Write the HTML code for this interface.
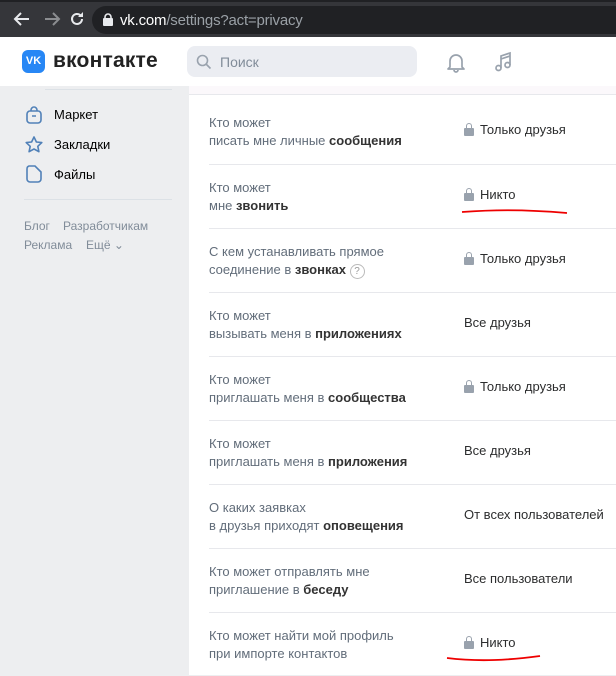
<!DOCTYPE html>
<html><head><meta charset="utf-8"><style>
*{margin:0;padding:0;box-sizing:border-box}
body{width:616px;height:675px;overflow:hidden;background:#edeef0;font-family:"Liberation Sans",Arial,sans-serif;position:relative}
.chrome{position:absolute;left:0;top:0;width:616px;height:37px;background:#35363a;border-top:2px solid #202124}
.url{position:absolute;left:92px;top:4px;width:540px;height:28px;border-radius:14px;background:#202124}
.url span{position:absolute;left:28px;top:6px;font-size:15px;color:#9aa0a6;letter-spacing:-0.2px}
.url b{font-weight:normal;color:#fff}
.hdr{position:absolute;left:0;top:37px;width:616px;height:49px;background:#fff}
.abs{position:absolute}
.side{position:absolute;left:0;top:86px;width:189px;height:589px;background:#edeef0}
.side .it{position:absolute;left:54px;font-size:13px;color:#000}
.side .ft{position:absolute;font-size:12px;color:#818c99}
.main{position:absolute;left:189px;top:86px;width:427px;height:589px;background:#fff}
.row{position:absolute;left:20px;width:407px;height:64px;border-top:1px solid #e7e8ec}
.lbl{position:absolute;left:0;top:14px;font-size:13px;line-height:18px;color:#626d7a}
.lbl b{color:#333;font-weight:bold}
.val{position:absolute;left:255px;top:22px;font-size:13px;color:#2c2d2e}
.val.l{padding-left:16px}
.val.l:before{content:"";position:absolute;left:0;top:6px;width:10px;height:8px;background:#99a2ad;border-radius:1px}
.val.l:after{content:"";position:absolute;left:2px;top:1px;width:6px;height:6px;border:1.5px solid #99a2ad;border-bottom:none;border-radius:3px 3px 0 0;box-sizing:border-box}
</style></head><body>
<div class="chrome">
<svg class="abs" style="left:12px;top:9px" width="20" height="16" viewBox="0 0 20 16"><path d="M17 8H4M9 2L3 8l6 6" stroke="#e8eaed" stroke-width="2" fill="none"/></svg>
<svg class="abs" style="left:42px;top:9px" width="20" height="16" viewBox="0 0 20 16"><path d="M3 8h13M11 2l6 6-6 6" stroke="#8b8d90" stroke-width="2" fill="none"/></svg>
<svg class="abs" style="left:68px;top:8px" width="18" height="18" viewBox="0 0 18 18"><path d="M14 9a5 5 0 1 1-1.5-3.6" stroke="#e8eaed" stroke-width="2" fill="none"/><path d="M15 2v5h-5z" fill="#e8eaed"/></svg>
<div class="url"><svg class="abs" style="left:11px;top:7px" width="10" height="13" viewBox="0 0 10 13"><rect x="0" y="5" width="10" height="8" rx="1" fill="#e8eaed"/><path d="M2 6V4a3 3 0 0 1 6 0v2" stroke="#e8eaed" stroke-width="1.6" fill="none"/></svg><span><b>vk.com</b>/settings?act=privacy</span></div>
</div>
<div class="hdr">
<div class="abs" style="left:22px;top:13px;width:23px;height:23px;background:#2787f5;border-radius:6px;color:#fff;font-weight:bold;font-size:11px;text-align:center;line-height:23px">VK</div>
<div class="abs" style="left:53px;top:12px;font-size:21px;font-weight:bold;color:#222;letter-spacing:0.2px">вконтакте</div>
<div class="abs" style="left:187px;top:9px;width:230px;height:31px;background:#ebedf2;border-radius:8px"></div>
<svg class="abs" style="left:196px;top:17px" width="16" height="16" viewBox="0 0 16 16"><circle cx="6.5" cy="6.5" r="5" stroke="#99a2ad" stroke-width="1.6" fill="none"/><path d="M10 10l4.5 4.5" stroke="#99a2ad" stroke-width="1.6"/></svg>
<div class="abs" style="left:220px;top:17px;font-size:14px;color:#818c99">Поиск</div>
<svg class="abs" style="left:444px;top:13px" width="24" height="24" viewBox="0 0 24 24"><path d="M6 17V11a6 6 0 0 1 12 0v6l2 2H4z" stroke="#99a2ad" stroke-width="1.7" fill="none" stroke-linejoin="round"/><path d="M10 20a2 2 0 0 0 4 0" stroke="#99a2ad" stroke-width="1.7" fill="none"/></svg>
<svg class="abs" style="left:492px;top:13px" width="24" height="24" viewBox="0 0 24 24"><path d="M9 18V6l9-3v12" stroke="#99a2ad" stroke-width="1.7" fill="none"/><circle cx="6.5" cy="18" r="2.5" stroke="#99a2ad" stroke-width="1.7" fill="none"/><circle cx="15.5" cy="15" r="2.5" stroke="#99a2ad" stroke-width="1.7" fill="none"/><path d="M9 9l9-3" stroke="#99a2ad" stroke-width="1.7"/></svg>
</div>
<div class="side">
<div class="abs" style="left:45px;top:3px;width:127px;height:1px;background:#dce1e6"></div>
<svg class="abs" style="left:24px;top:19px" width="20" height="20" viewBox="0 0 20 20"><rect x="3" y="6" width="14" height="12" rx="3" stroke="#5181b8" stroke-width="1.6" fill="none"/><path d="M7 6V5a3 3 0 0 1 6 0v1M8 11h4" stroke="#5181b8" stroke-width="1.6" fill="none"/></svg>
<div class="it" style="top:21px">Маркет</div>
<svg class="abs" style="left:24px;top:49px" width="20" height="20" viewBox="0 0 20 20"><path d="M10 2l2.4 5 5.4.6-4 3.7 1.1 5.4L10 14l-4.9 2.7 1.1-5.4-4-3.7 5.4-.6z" stroke="#5181b8" stroke-width="1.6" fill="none" stroke-linejoin="round"/></svg>
<div class="it" style="top:51px">Закладки</div>
<svg class="abs" style="left:24px;top:78px" width="20" height="20" viewBox="0 0 20 20"><path d="M5 2h6l6 6v7a3 3 0 0 1-3 3H6a3 3 0 0 1-3-3V5a3 3 0 0 1 2-3z" stroke="#5181b8" stroke-width="1.6" fill="none"/></svg>
<div class="it" style="top:81px">Файлы</div>
<div class="abs" style="left:24px;top:113px;width:148px;height:1px;background:#dce1e6"></div>
<div class="ft" style="left:24px;top:133px">Блог</div>
<div class="ft" style="left:63px;top:133px">Разработчикам</div>
<div class="ft" style="left:24px;top:152px">Реклама</div>
<div class="ft" style="left:86px;top:152px">Ещё ⌄</div>
</div>
<div class="main">
<div class="abs" style="left:0;top:0;width:427px;height:9px;background:#fbf8fb;border-bottom:1px solid #e7e8ec"></div>
<div class="row" style="top:14px;border-top:none"><div class="lbl">Кто может<br>писать мне личные <b>сообщения</b></div><div class="val l">Только друзья</div></div>
<div class="row" style="top:78px"><div class="lbl">Кто может<br>мне <b>звонить</b></div><div class="val l">Никто</div></div>
<div class="row" style="top:142px"><div class="lbl">С кем устанавливать прямое<br>соединение в <b>звонках</b> <span style="display:inline-block;width:15px;height:15px;border:1px solid #bbb;border-radius:50%;font-size:10px;text-align:center;line-height:13px;color:#999">?</span></div><div class="val l">Только друзья</div></div>
<div class="row" style="top:206px"><div class="lbl">Кто может<br>вызывать меня в <b>приложениях</b></div><div class="val">Все друзья</div></div>
<div class="row" style="top:270px"><div class="lbl">Кто может<br>приглашать меня в <b>сообщества</b></div><div class="val l">Только друзья</div></div>
<div class="row" style="top:334px"><div class="lbl">Кто может<br>приглашать меня в <b>приложения</b></div><div class="val">Все друзья</div></div>
<div class="row" style="top:398px"><div class="lbl">О каких заявках<br>в друзья приходят <b>оповещения</b></div><div class="val">От всех пользователей</div></div>
<div class="row" style="top:462px"><div class="lbl">Кто может отправлять мне<br>приглашение в <b>беседу</b></div><div class="val">Все пользователи</div></div>
<div class="row" style="top:526px"><div class="lbl">Кто может найти мой профиль<br>при импорте контактов</div><div class="val l">Никто</div></div>
</div>
<svg class="abs" style="left:0;top:0" width="616" height="675"><path d="M462 212 C490 210,520 209,567 213" stroke="#e00" stroke-width="1.8" fill="none"/><path d="M447 658 C480 662,510 660,540 656" stroke="#e00" stroke-width="1.8" fill="none"/></svg>
</body></html>
